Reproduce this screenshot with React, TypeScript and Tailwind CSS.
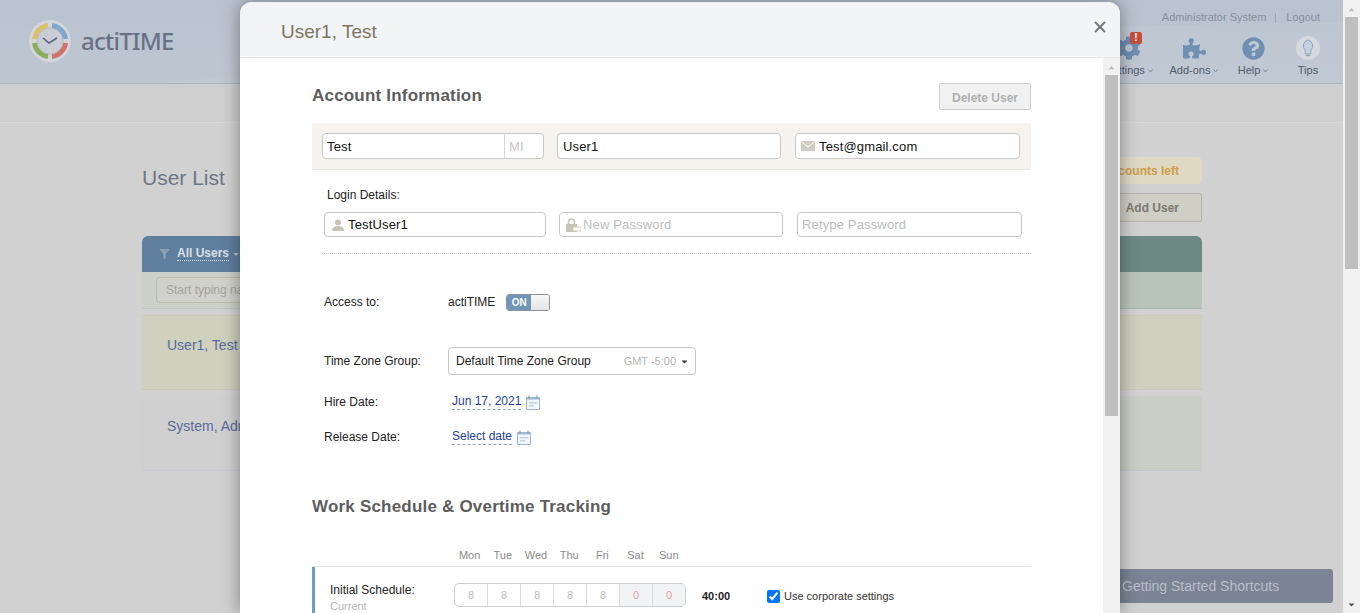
import React from 'react';
import { X } from 'lucide-react';
import { FaCog, FaPuzzlePiece, FaQuestionCircle, FaCaretDown, FaCaretUp, FaFilter } from 'react-icons/fa';

const font = "font-['Liberation_Sans',Arial,sans-serif]";

const Logo = () => (
  <svg width="44" height="44" viewBox="0 0 44 44" className="shrink-0">
    <circle cx="22" cy="22" r="21" fill="#d3d6da" />
    <path d="M6.5 20 A15.5 15.5 0 0 1 20 6.5" fill="none" stroke="#d8bf6c" strokeWidth="5" />
    <path d="M24 6.5 A15.5 15.5 0 0 1 37.5 20" fill="none" stroke="#7fa8cf" strokeWidth="5" />
    <path d="M37.5 24 A15.5 15.5 0 0 1 24 37.5" fill="none" stroke="#cf736b" strokeWidth="5" />
    <path d="M20 37.5 A15.5 15.5 0 0 1 6.5 24" fill="none" stroke="#8bae5e" strokeWidth="5" />
    <circle cx="22" cy="22" r="13" fill="#c9ced6" stroke="#aeb4bd" strokeWidth="0.8" />
    <path d="M15 19 L21 24 L29 19" fill="none" stroke="#5c6579" strokeWidth="1.6" />
  </svg>
);

const NavItem = ({ label, width, caret = true, children }: { label: string; width: string; caret?: boolean; children: React.ReactNode }) => (
  <div className={`flex flex-col items-center ${width}`}>
    <div className="h-[28px] flex items-center justify-center relative">{children}</div>
    <div className="flex items-center gap-[3px] text-[11px] leading-[13px] mt-[2px] text-[#515c6c]">
      <span>{label}</span>
      {caret && (
        <svg width="5" height="4" viewBox="0 0 5 4">
          <path d="M0.5 0.5 L2.5 3 L4.5 0.5" fill="none" stroke="#7d8694" strokeWidth="1" />
        </svg>
      )}
    </div>
  </div>
);

const Background = () => (
  <div className="flex-1 min-w-0 flex flex-col h-[613px] overflow-hidden bg-[#d1d1d1]">
    {/* Header */}
    <div className="relative h-[84px] shrink-0 border-b border-[#aab3bf] bg-gradient-to-b from-[#b9c3cf] to-[#bdc6d1] flex justify-between">
      <svg width="1343" height="83" viewBox="0 0 1343 83" className="absolute left-0 top-0 pointer-events-none">
        <path d="M165 83 C400 55 800 30 1343 22 V83 Z" fill="#ffffff" opacity="0.05" />
      </svg>
      <div className="relative flex items-center gap-[9px] pl-[28px] pb-[1px]">
        <Logo />
        <span className="font-['Noto_Sans',sans-serif] font-medium text-[24px] leading-none text-[#687284] tracking-[-0.75px]">actiTIME</span>
      </div>
      <div className="relative flex flex-col items-end pr-[10px]">
        <div className="flex items-center text-[11px] h-[13px] mt-[11px] pr-[13px] text-[#8590a0]">
          <span>Administrator System</span>
          <span className="w-px h-[10px] bg-[#a0aab6] ml-[9px] mr-[10px]"></span>
          <span>Logout</span>
        </div>
        <div className="flex mt-[10px]">
          <NavItem label="Settings" width="w-[72px]">
            <FaCog className="w-[24px] h-[24px] text-[#6f8fb3]" />
            <span className="absolute -top-[2px] left-[13px] w-[12px] h-[12px] rounded-[2px] bg-[#c4503f] text-white text-[10px] leading-[12px] text-center font-bold">!</span>
          </NavItem>
          <NavItem label="Add-ons" width="w-[58px]">
            <FaPuzzlePiece className="w-[23px] h-[23px] text-[#6f8fb3]" />
          </NavItem>
          <NavItem label="Help" width="w-[60px]">
            <FaQuestionCircle className="w-[23px] h-[23px] text-[#6f8fb3]" />
          </NavItem>
          <NavItem label="Tips" width="w-[50px]" caret={false}>
            <div className="w-[24px] h-[24px] rounded-full bg-[#d5d8dc] flex items-center justify-center">
              <svg width="14" height="18" viewBox="0 0 14 18">
                <path d="M7 1 A6 6 0 0 1 10 11 L9.5 15 L4.5 15 L4 11 A6 6 0 0 1 7 1 Z" fill="#c3d2e2" stroke="#8da7c2" strokeWidth="1" />
                <path d="M5 16.5 H9" stroke="#8da7c2" strokeWidth="1.5" />
              </svg>
            </div>
          </NavItem>
        </div>
      </div>
    </div>
    {/* Sub bar */}
    <div className="h-[39px] shrink-0 border-b border-[#d8d8d8] bg-[#cfcfcf]"></div>
    {/* Content */}
    <div className="pl-[142px] pr-[141px] flex-1">
      <div className="flex justify-between h-[113px]">
        <h1 className="text-[21px] leading-[26px] mt-[42px] text-[#6b7686]">User List</h1>
        <div className="flex flex-col items-end pt-[34px]">
          <div className="h-[27px] w-[120px] rounded-[5px] bg-[#dfd9c4] text-[12px] font-bold leading-[28px] pl-[23px] text-[#cd9f4a] whitespace-nowrap">accounts left</div>
          <div className="h-[29px] mt-[9px] w-[100px] rounded-[2px] border border-[#b7b5a7] bg-[#cfcfc6] text-[12px] font-bold leading-[28px] text-right pr-[22px] text-[#7c7a70]">Add User</div>
        </div>
      </div>
      <div className="grid grid-cols-2">
        <div className="h-[36px] rounded-tl-[6px] bg-[#5f7f9f] flex items-center pl-[17px] gap-[7px]">
          <FaFilter className="w-[11px] h-[10px] text-[#8f9fb1]" />
          <span className="text-[12px] font-bold text-[#d9dfe5] border-b border-dotted border-[#d9dfe5] leading-[13px]">All Users</span>
          <FaCaretDown className="w-[8px] h-[8px] -ml-[4px] text-[#b9c5d1]" />
        </div>
        <div className="h-[36px] rounded-tr-[6px] bg-[#6c8a83]"></div>
        <div className="h-[37px] bg-[#cdcfc9] border-b border-[#c0c5bd] pl-[14px] pt-[5px]">
          <div className="w-[150px] h-[26px] rounded-[4px] border border-[#bdbcaa] bg-[#d1d1cb] text-[12px] leading-[24px] pl-[9px] text-[#a3a3a0]">Start typing name</div>
        </div>
        <div className="h-[37px] bg-[#b9c4bb] border-b border-[#a8b8ac]"></div>
        <div className="h-[75px] mt-[6px] bg-[#d0d0bf] border-y border-[#c9c9b8] pl-[25px] pt-[19px] text-[14px] leading-[20px] text-[#566c9e]">User1, Test</div>
        <div className="h-[75px] mt-[6px] bg-[#cfcfbf] border-y border-[#c9c9b8]"></div>
        <div className="h-[75px] mt-[6px] bg-[#cfd0cf] border-b border-[#c6ccd2] pl-[25px] pt-[20px] text-[14px] leading-[20px] text-[#566c9e]">System, Admin</div>
        <div className="h-[75px] mt-[6px] bg-[#c9cec7] border-b border-[#c0c8ca]"></div>
      </div>
    </div>
  </div>
);

const PageScrollbar = () => (
  <div className="w-[17px] h-[613px] shrink-0 bg-[#f1f1f1] flex flex-col items-center">
    <FaCaretUp className="w-[9px] h-[9px] mt-[5px] text-[#c0c0c0]" />
    <div className="w-[13px] h-[252px] mt-[3px] bg-[#bfbfbf]"></div>
    <div className="flex-1"></div>
    <FaCaretDown className="w-[9px] h-[9px] mb-[4px] text-[#505050]" />
  </div>
);

const Field = ({ w, h = 'h-[25px]', children }: { w: string; h?: string; children: React.ReactNode }) => (
  <div className={`${w} ${h} rounded-[4px] border border-[#c8c8c8] bg-white flex items-center text-[13px] tracking-[0.15px] overflow-hidden`}>{children}</div>
);

const CalendarIcon = () => (
  <svg width="14" height="15" viewBox="0 0 14 15" className="shrink-0">
    <path d="M0.5 2.5 H13.5 V14.5 H0.5 Z" fill="#f2f6fa" stroke="#9fb6cc" />
    <path d="M1 2 H13 V4.5 H1 Z" fill="#9fb6cc" />
    <path d="M3 0.5 V3 M11 0.5 V3" stroke="#6f8aa4" />
    <path d="M3 7 H11 V8.5 H3 Z M3 10 H8 V11.5 H3 Z" fill="#c5d3e0" />
  </svg>
);

const FormRow = ({ label, mt, children }: { label: string; mt: string; children: React.ReactNode }) => (
  <div className={`flex items-center pl-[12px] ${mt}`}>
    <div className="w-[124px] shrink-0 text-[12px] text-[#222]">{label}</div>
    {children}
  </div>
);

const DateLink = ({ text }: { text: string }) => (
  <div className="flex items-center gap-[5px] pl-[4px]">
    <span className="text-[12px] leading-[15px] text-[#1d3f9e] border-b border-dashed border-[#9aa6bd]">{text}</span>
    <CalendarIcon />
  </div>
);

const Modal = () => {
  const days = ['Mon', 'Tue', 'Wed', 'Thu', 'Fri', 'Sat', 'Sun'];
  const hours = ['8', '8', '8', '8', '8', '0', '0'];
  return (
    <div className="absolute left-[240px] top-[2px] w-[880px] h-[611px] rounded-t-[12px] bg-white flex flex-col overflow-hidden shadow-[0_0_18px_rgba(0,0,0,0.4)]">
      <div className="h-[56px] shrink-0 bg-[#f3f4f6] border-b border-[#e8e8e8] flex items-center justify-between pl-[41px] pr-[11px]">
        <span className="text-[19px] text-[#7d7660] mt-[6px]">User1, Test</span>
        <X className="w-[18px] h-[18px] text-[#777] mb-[6px]" strokeWidth={2.5} />
      </div>
      <div className="flex flex-1 min-h-0">
        <div className="flex-1 min-w-0 pl-[72px] overflow-hidden">
          <div className="w-[719px]">
            <div className="flex justify-between items-start pt-[25px] h-[65px]">
              <h2 className="text-[17px] leading-[24px] font-bold text-[#5d5d5d] mt-[1px] tracking-[0.2px]">Account Information</h2>
              <div className="w-[92px] h-[27px] rounded-[2px] border border-[#cdcdcd] bg-[#f1f1f1] text-[12px] font-bold leading-[28px] text-center text-[#b0b0b0]">Delete User</div>
            </div>
            <div className="h-[47px] bg-[#f6f3ee] border-b border-[#e6e6e4] flex items-start pt-[10px] pl-[10px]">
              <Field w="w-[222px]" h="h-[26px]">
                <span className="flex-1 pl-[4px] pt-[1px] text-[#111]">Test</span>
                <span className="w-[39px] h-full border-l border-[#d5d5d5] pl-[4px] leading-[25px] text-[#c4c4c4]">MI</span>
              </Field>
              <div className="w-[13px]"></div>
              <Field w="w-[224px]" h="h-[26px]"><span className="pl-[5px] pt-[1px] text-[#111]">User1</span></Field>
              <div className="w-[14px]"></div>
              <Field w="w-[225px]" h="h-[26px]">
                <svg width="14" height="10" viewBox="0 0 14 10" className="ml-[5px] mr-[4px]">
                  <path d="M0 0 H14 V10 H0 Z" fill="#cfcbc0" />
                  <path d="M0 0.5 L7 6 L14 0.5" fill="none" stroke="#fff" />
                </svg>
                <span className="pt-[1px] text-[#111]">Test@gmail.com</span>
              </Field>
            </div>
            <div className="pl-[15px] mt-[18px] text-[12px] leading-[14px] text-[#222]">Login Details:</div>
            <div className="flex pl-[12px] mt-[10px]">
              <Field w="w-[222px]">
                <svg width="12" height="12" viewBox="0 0 12 12" className="ml-[7px] mr-[4px]">
                  <circle cx="6" cy="3.5" r="3" fill="#c8c4b8" />
                  <path d="M0 12 C0 8 3 7.5 4.5 7 H7.5 C9 7.5 12 8 12 12 Z" fill="#c8c4b8" />
                </svg>
                <span className="text-[#111]">TestUser1</span>
              </Field>
              <div className="w-[13px]"></div>
              <Field w="w-[224px]">
                <svg width="16" height="14" viewBox="0 0 16 14" className="ml-[5px] mr-[2px]">
                  <path d="M3.5 6 V4 A3 3 0 0 1 9.5 4 V6" fill="none" stroke="#c8c4b8" strokeWidth="1.6" />
                  <path d="M1 6 H12 V14 H1 Z" fill="#c8c4b8" />
                  <path d="M8 9 H16 V13 H8 Z" fill="#fff" stroke="#c8c4b8" strokeWidth="0.8" />
                </svg>
                <span className="text-[#bdbdbd]">New Password</span>
              </Field>
              <div className="w-[14px]"></div>
              <Field w="w-[225px]"><span className="pl-[4px] text-[#bdbdbd]">Retype Password</span></Field>
            </div>
            <div className="ml-[12px] mt-[16px] border-b border-dotted border-[#bdbdbd]"></div>
            <FormRow label="Access to:" mt="mt-[39px]">
              <span className="text-[12px] text-[#222]">actiTIME</span>
              <div className="ml-[11px] w-[44px] h-[17px] rounded-[3px] border border-[#8b9299] flex overflow-hidden">
                <span className="w-[24px] bg-[#6f96b9] text-white text-[10px] font-bold leading-[15px] text-center">ON</span>
                <span className="flex-1 bg-gradient-to-b from-[#f8f8f8] to-[#e4e4e4]"></span>
              </div>
            </FormRow>
            <FormRow label="Time Zone Group:" mt="mt-[36px]">
              <div className="w-[248px] h-[28px] rounded-[4px] border border-[#c8c8c8] flex items-center pl-[7px] pr-[6px] text-[12px] text-[#222]">
                <span className="flex-1">Default Time Zone Group</span>
                <span className="text-[11px] text-[#b5b5b5] mr-[4px]">GMT -5:00</span>
                <FaCaretDown className="w-[9px] h-[9px] text-[#333]" />
              </div>
            </FormRow>
            <FormRow label="Hire Date:" mt="mt-[18px]"><DateLink text="Jun 17, 2021" /></FormRow>
            <FormRow label="Release Date:" mt="mt-[17px]"><DateLink text="Select date" /></FormRow>
            <h2 className="text-[17px] leading-[24px] font-bold text-[#5d5d5d] mt-[49px] tracking-[0.2px]">Work Schedule &amp; Overtime Tracking</h2>
            <div className="flex pl-[141px] mt-[30px] h-[18px] border-b border-[#e2e2e2]">
              {days.map(d => (
                <span key={d} className="w-[33.2px] text-center text-[11px] leading-[13px] text-[#8a8a8a]">{d}</span>
              ))}
            </div>
            <div className="border-l-[3px] border-[#6f9bc5] flex h-[60px] pl-[15px] pt-[16px]">
              <div className="w-[124px] shrink-0">
                <div className="text-[12px] leading-[14px] text-[#222]">Initial Schedule:</div>
                <div className="text-[11px] leading-[13px] mt-[3px] text-[#b5b5b5]">Current</div>
              </div>
              <div className="flex h-[24px] w-[232px] rounded-[5px] border border-[#cfcfcf] overflow-hidden">
                {hours.map((h, i) => (
                  <span key={i} className={`flex-1 text-center text-[11px] leading-[22px] border-r last:border-r-0 border-[#dcdcdc] ${i > 4 ? 'bg-[#f2f3f5] text-[#dba3a3]' : 'text-[#bdbdbd]'}`}>{h}</span>
                ))}
              </div>
              <div className="ml-[16px] w-[65px] text-[11px] font-bold leading-[26px] text-[#222]">40:00</div>
              <label className="flex items-center h-[26px] gap-[4px] text-[11px] text-[#333]">
                <input type="checkbox" defaultChecked readOnly className="w-[13px] h-[13px]" />
                Use corporate settings
              </label>
            </div>
          </div>
        </div>
        <div className="w-[17px] shrink-0 bg-[#f1f1f1] flex flex-col items-center">
          <FaCaretUp className="w-[9px] h-[9px] mt-[5px] text-[#c0c0c0]" />
          <div className="w-[13px] h-[341px] mt-[3px] bg-[#bfbfbf]"></div>
        </div>
      </div>
    </div>
  );
};

export default function App() {
  return (
    <div className={`relative flex h-[613px] w-[1360px] overflow-hidden ${font}`}>
      <Background />
      <PageScrollbar />
      {/* Getting started bar sits fixed over the page */}
      <div className="absolute left-[1060px] top-[569px] w-[273px] h-[34px] rounded-[3px] bg-[#7a8494] text-[14px] leading-[34px] pl-[62px] text-[#b9bfc8]">Getting Started Shortcuts</div>
      <Modal />
    </div>
  );
}
